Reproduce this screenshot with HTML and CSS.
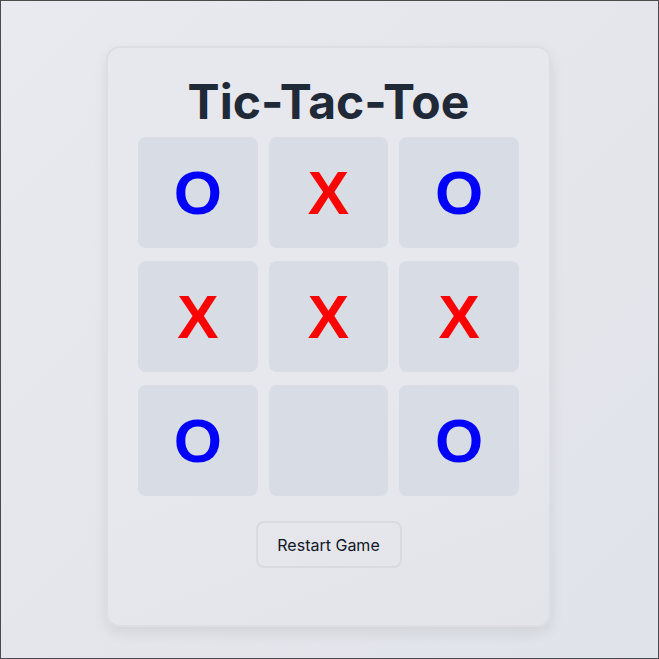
FILE: index.html
```html
<!DOCTYPE html>
<html lang="en">
<head>
<meta charset="utf-8">
<title>Tic-Tac-Toe</title>
<link rel="stylesheet" href="styles.css">
</head>
<body>
<main class="page">
  <section class="card">
    <h1 class="title">Tic-Tac-Toe</h1>
    <div class="board">
      <div class="cell o">O</div>
      <div class="cell x">X</div>
      <div class="cell o">O</div>
      <div class="cell x">X</div>
      <div class="cell x">X</div>
      <div class="cell x">X</div>
      <div class="cell o">O</div>
      <div class="cell"></div>
      <div class="cell o">O</div>
    </div>
    <button class="restart">Restart Game</button>
  </section>
</main>
</body>
</html>
```

FILE: styles.css
```css
html, body {
  height: 100%;
}
body {
  margin: 0;
  box-sizing: border-box;
  border: 1px solid #4b4b4b;
  background: linear-gradient(135deg, #e8eaef 0%, #e4e6ec 50%, #e0e3e9 100%);
  font-family: Inter, "Noto Sans", sans-serif;
}
.page {
  display: flex;
  justify-content: center;
  padding: 45px 2px 0 0;
}
.card {
  width: 445px;
  box-sizing: border-box;
  padding: 25px 30px 57px;
  background: linear-gradient(160deg, #e6e8ee 0%, #e6e8ed 60%, #e2e4ea 100%);
  border: 2px solid #dcdee3;
  border-radius: 14px;
  box-shadow: 0 6px 14px rgba(0, 0, 0, 0.08);
  display: flex;
  flex-direction: column;
  align-items: center;
}
.title {
  margin: 0 0 6px;
  font-size: 48px;
  line-height: 58px;
  font-weight: 700;
  color: #1f2937;
  letter-spacing: 0;
}
.board {
  width: 381px;
  display: grid;
  grid-template-columns: repeat(3, 1fr);
  grid-auto-rows: 111px;
  column-gap: 11px;
  row-gap: 13px;
}
.cell {
  background: #d8dce5;
  border-radius: 8px;
  display: flex;
  align-items: center;
  justify-content: center;
  font-family: "Liberation Sans", Arial, sans-serif;
  font-weight: 700;
  font-size: 62px;
}
.cell.x { color: #ff0000; }
.cell.o { color: #0000ff; }
.restart {
  margin-top: 25px;
  width: 146px;
  height: 47px;
  background: transparent;
  border: 2px solid #d8dadf;
  border-radius: 8px;
  font-family: Inter, "Noto Sans", sans-serif;
  font-size: 16px;
  color: #111827;
  cursor: pointer;
}
```
